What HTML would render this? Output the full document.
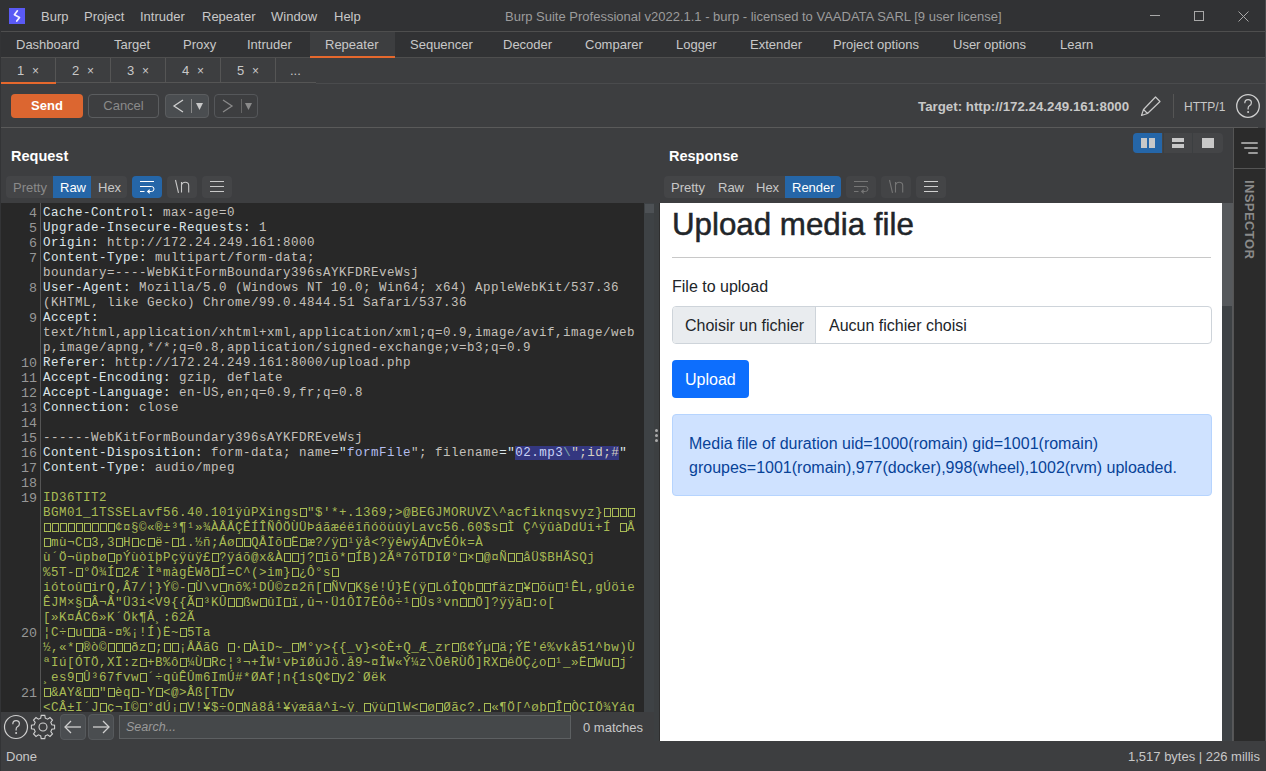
<!DOCTYPE html>
<html><head><meta charset="utf-8">
<style>
*{margin:0;padding:0;box-sizing:border-box}
html,body{width:1266px;height:771px;overflow:hidden;background:#3d3e40;font-family:"Liberation Sans",sans-serif;font-size:13px;color:#c8c8c8}
.a{position:absolute;white-space:pre}
#title{left:0;top:0;width:1266px;height:31px;background:#313234}
#tabs{left:0;top:32px;width:1266px;height:25px;background:#313234}
.hl{position:absolute;height:1px;background:#4e4e4e}
.ln{position:absolute;left:0;width:36px;text-align:right;font-family:"Liberation Mono",monospace;font-size:13.333px;line-height:15px;color:#979797}
.b{display:inline-block;width:8px;height:15px;vertical-align:top;position:relative}.b::after{content:"";box-sizing:border-box;position:absolute;left:1px;top:2px;width:7px;height:9px;border:1px solid currentColor}
.cr{position:absolute;left:42px;white-space:pre;font-family:"Liberation Mono",monospace;font-size:12.5px;letter-spacing:0.5px;line-height:15px}
</style></head><body>
<!-- title bar -->
<div class="a" id="title"></div>
<div class="a" style="left:9px;top:8px;width:16px;height:16px;background:#5a5af5"></div>
<div class="a" style="left:41px;top:9px">Burp</div>
<div class="a" style="left:84px;top:9px">Project</div>
<div class="a" style="left:140px;top:9px">Intruder</div>
<div class="a" style="left:202px;top:9px">Repeater</div>
<div class="a" style="left:271px;top:9px">Window</div>
<div class="a" style="left:334px;top:9px">Help</div>
<div class="a" style="left:505px;top:9px;color:#9c9c9c">Burp Suite Professional v2022.1.1 - burp - licensed to VAADATA SARL [9 user license]</div>
<div class="hl" style="left:0;top:31px;width:1266px"></div>
<!-- main tabs -->
<div class="a" id="tabs"></div>
<div class="a" style="left:310px;top:32px;width:85px;height:25px;background:#3d3e40"></div>
<div class="a" style="left:310px;top:56px;width:85px;height:2px;background:#e5682d;z-index:2"></div>
<div class="a" style="left:16px;top:37px">Dashboard</div>
<div class="a" style="left:114px;top:37px">Target</div>
<div class="a" style="left:183px;top:37px">Proxy</div>
<div class="a" style="left:247px;top:37px">Intruder</div>
<div class="a" style="left:325px;top:37px">Repeater</div>
<div class="a" style="left:410px;top:37px">Sequencer</div>
<div class="a" style="left:503px;top:37px">Decoder</div>
<div class="a" style="left:585px;top:37px">Comparer</div>
<div class="a" style="left:676px;top:37px">Logger</div>
<div class="a" style="left:750px;top:37px">Extender</div>
<div class="a" style="left:833px;top:37px">Project options</div>
<div class="a" style="left:953px;top:37px">User options</div>
<div class="a" style="left:1060px;top:37px">Learn</div>
<div class="hl" style="left:0;top:57px;width:1266px"></div>

<!-- subtabs -->
<div class="a" style="left:0;top:58px;width:316px;height:25px;background:#3d3e40"></div>
<div class="hl" style="left:316px;top:83px;width:950px;background:#4a4b4d"></div>
<div class="a" style="left:55px;top:58px;width:1px;height:24px;background:#555"></div>
<div class="a" style="left:110px;top:58px;width:1px;height:24px;background:#555"></div>
<div class="a" style="left:165px;top:58px;width:1px;height:24px;background:#555"></div>
<div class="a" style="left:220px;top:58px;width:1px;height:24px;background:#555"></div>
<div class="a" style="left:275px;top:58px;width:1px;height:24px;background:#555"></div>
<div class="hl" style="left:56px;top:82px;width:260px;background:#555"></div>
<div class="a" style="left:1px;top:82px;width:55px;height:2px;background:#e5682d"></div>
<div class="a" style="left:17px;top:63px">1</div><div class="a" style="left:32px;top:64px;font-size:12px">×</div>
<div class="a" style="left:72px;top:63px">2</div><div class="a" style="left:87px;top:64px;font-size:12px">×</div>
<div class="a" style="left:127px;top:63px">3</div><div class="a" style="left:142px;top:64px;font-size:12px">×</div>
<div class="a" style="left:182px;top:63px">4</div><div class="a" style="left:197px;top:64px;font-size:12px">×</div>
<div class="a" style="left:237px;top:63px">5</div><div class="a" style="left:252px;top:64px;font-size:12px">×</div>
<div class="a" style="left:290px;top:63px">...</div>
<!-- toolbar -->
<div class="a" style="left:11px;top:94px;width:72px;height:24px;background:#dc6630;border-radius:4px;color:#fff;font-weight:bold;text-align:center;line-height:24px">Send</div>
<div class="a" style="left:88px;top:94px;width:71px;height:24px;border:1px solid #5b5d5f;border-radius:4px;color:#8a8a8a;text-align:center;line-height:22px">Cancel</div>
<div class="a" style="left:165px;top:94px;width:44px;height:24px;border:1px solid #5b5d5f;border-radius:4px;background:#4a4d50"></div>
<div class="a" style="left:214px;top:94px;width:44px;height:24px;border:1px solid #55575a;border-radius:4px"></div>
<div class="hl" style="left:0;top:127px;width:1258px;background:#5a5a5a"></div>
<div class="a" style="left:918px;top:99px;font-weight:bold;font-size:13.3px;color:#c8c8c8">Target: http://172.24.249.161:8000</div>
<div class="a" style="left:1173px;top:94px;width:1px;height:24px;background:#555"></div>
<div class="a" style="left:1184px;top:100px;font-size:12px;color:#c8c8c8">HTTP/1</div>

<!-- nav buttons icons -->
<svg class="a" style="left:165px;top:94px" width="94" height="24" viewBox="0 0 94 24">
<polyline points="18,6 9,12 18,18" fill="none" stroke="#cfcfcf" stroke-width="1.3"/>
<line x1="26.5" y1="5" x2="26.5" y2="19" stroke="#8a8a8a" stroke-width="1"/>
<polygon points="31,9 38,9 34.5,16" fill="#c8c8c8"/>
<polyline points="58,6 67,12 58,18" fill="none" stroke="#8a8a8a" stroke-width="1.3"/>
<line x1="76.5" y1="5" x2="76.5" y2="19" stroke="#666" stroke-width="1"/>
<polygon points="80,9 87,9 83.5,16" fill="#8a8a8a"/>
</svg>
<!-- pencil -->
<svg class="a" style="left:1140px;top:95px" width="24" height="24" viewBox="0 0 24 24">
<path d="M1.5 20.5 L3.5 14.5 L15.5 2 L20 6.5 L7.5 18.5 Z M3.5 14.5 L7.5 18.5" fill="none" stroke="#c8c8c8" stroke-width="1.2" stroke-linejoin="round"/>
</svg>
<!-- help -->
<svg class="a" style="left:1236px;top:94px" width="25" height="25" viewBox="0 0 25 25">
<circle cx="12" cy="12" r="11.3" fill="none" stroke="#cfcfcf" stroke-width="1.3"/>
<path d="M8.8 9.2 Q8.8 5.6 12.1 5.6 Q15.4 5.6 15.4 8.7 Q15.4 10.6 13.4 11.8 Q12.1 12.6 12.1 14.4 V15.6" fill="none" stroke="#cfcfcf" stroke-width="1.2"/><circle cx="12.1" cy="18" r="1" fill="#cfcfcf"/>
</svg>
<!-- panel headers -->
<div class="a" style="left:11px;top:148px;font-weight:bold;font-size:14.5px;color:#fff">Request</div>
<div class="a" style="left:669px;top:148px;font-weight:bold;font-size:14.5px;color:#fff">Response</div>
<!-- request buttons -->
<div class="a" style="left:6px;top:176px;width:121px;height:22px;background:#444547;border-radius:4px"></div>
<div class="a" style="left:53px;top:176px;width:38px;height:22px;background:#2566a8"></div>
<div class="a" style="left:13px;top:180px;color:#8a8a8a">Pretty</div>
<div class="a" style="left:60px;top:180px;color:#fff">Raw</div>
<div class="a" style="left:98px;top:180px;color:#c8c8c8">Hex</div>
<div class="a" style="left:132px;top:176px;width:30px;height:22px;background:#2566a8;border-radius:4px"></div>
<div class="a" style="left:167px;top:176px;width:30px;height:22px;background:#444547;border-radius:4px"></div>
<div class="a" style="left:202px;top:176px;width:30px;height:22px;background:#444547;border-radius:4px"></div>
<svg class="a" style="left:132px;top:176px" width="100" height="22" viewBox="0 0 100 22">
<g fill="none" stroke-width="1">
<path d="M8 5.5 H22 M8 10.5 H19.5 A2.5 2.5 0 0 1 19.5 15.5 H16.5 M8 15.5 H12.5" stroke="#ffffff"/>
<polygon points="14.8,15.5 17.6,13 17.6,18" fill="#ffffff" stroke="none"/>
<path d="M43.5 4 L46.5 16.8 M49.5 16.5 V6 M49.5 8.8 Q50.5 6.3 53.2 6.3 Q56.7 6.3 56.7 9.5 V16.5" stroke="#c8c8c8" stroke-width="1.1"/>
<path d="M78 5.5 H92 M78 10.5 H92 M78 15.5 H92" stroke="#c8c8c8"/>
</g>
</svg>
<!-- response buttons -->
<div class="a" style="left:664px;top:176px;width:177px;height:22px;background:#444547;border-radius:4px"></div>
<div class="a" style="left:785px;top:176px;width:56px;height:22px;background:#2566a8;border-radius:0 4px 4px 0"></div>
<div class="a" style="left:671px;top:180px;color:#c8c8c8">Pretty</div>
<div class="a" style="left:718px;top:180px;color:#c8c8c8">Raw</div>
<div class="a" style="left:756px;top:180px;color:#c8c8c8">Hex</div>
<div class="a" style="left:792px;top:180px;color:#fff">Render</div>
<div class="a" style="left:846px;top:176px;width:30px;height:22px;background:#434446;border-radius:4px"></div>
<div class="a" style="left:881px;top:176px;width:30px;height:22px;background:#434446;border-radius:4px"></div>
<div class="a" style="left:916px;top:176px;width:30px;height:22px;background:#444547;border-radius:4px"></div>
<svg class="a" style="left:846px;top:176px" width="100" height="22" viewBox="0 0 100 22">
<g fill="none" stroke-width="1">
<path d="M8 5.5 H22 M8 10.5 H19.5 A2.5 2.5 0 0 1 19.5 15.5 H16.5 M8 15.5 H12.5" stroke="#767676"/>
<polygon points="14.8,15.5 17.6,13 17.6,18" fill="#767676" stroke="none"/>
<path d="M43.5 4 L46.5 16.8 M49.5 16.5 V6 M49.5 8.8 Q50.5 6.3 53.2 6.3 Q56.7 6.3 56.7 9.5 V16.5" stroke="#767676" stroke-width="1.1"/>
<path d="M78 5.5 H92 M78 10.5 H92 M78 15.5 H92" stroke="#d0d0d0"/>
</g>
</svg>
<!-- layout buttons -->
<div class="a" style="left:1133px;top:133px;width:90px;height:20px;background:#444547;border-radius:4px"></div>
<div class="a" style="left:1133px;top:133px;width:29px;height:20px;background:#2566a8;border-radius:4px 0 0 4px"></div>
<div class="a" style="left:1163px;top:133px;width:1px;height:20px;background:#3c3f41"></div>
<div class="a" style="left:1192px;top:133px;width:1px;height:20px;background:#3c3f41"></div>
<div class="a" style="left:1141px;top:138px;width:6px;height:10px;background:#c8c8c8"></div>
<div class="a" style="left:1149px;top:138px;width:6px;height:10px;background:#c8c8c8"></div>
<div class="a" style="left:1172px;top:138px;width:12px;height:4px;background:#c8c8c8"></div>
<div class="a" style="left:1172px;top:144px;width:12px;height:4px;background:#c8c8c8"></div>
<div class="a" style="left:1202px;top:138px;width:12px;height:10px;background:#c8c8c8"></div>
<!-- inspector -->
<div class="a" style="left:1233px;top:128px;width:1px;height:613px;background:#555"></div>
<div class="a" style="left:1234px;top:128px;width:32px;height:613px;background:#2b2b2b"></div>
<div class="a" style="left:1234px;top:168px;width:31px;height:1px;background:#555"></div>
<div class="a" style="left:1265px;top:128px;width:1px;height:613px;background:#4a4a4a"></div>
<div class="a" style="left:1241px;top:142px;width:17px;height:2px;background:#9a9a9a;border-radius:1px"></div>
<div class="a" style="left:1244px;top:147px;width:14px;height:2px;background:#9a9a9a;border-radius:1px"></div>
<div class="a" style="left:1248px;top:152px;width:10px;height:2px;background:#9a9a9a;border-radius:1px"></div>
<div class="a" style="left:1257px;top:180px;transform-origin:0 0;transform:rotate(90deg);font-weight:bold;font-size:13px;letter-spacing:0.4px;color:#8a8a8a">INSPECTOR</div>
<div class="a" style="left:1265px;top:266px;width:1px;height:20px;background:#3b6a9e"></div>

<!-- divider -->
<div class="a" style="left:654px;top:203px;width:5px;height:538px;background:#3c3f41"></div>
<div class="a" style="left:655px;top:429px;width:3px;height:3px;border-radius:50%;background:#aaa"></div>
<div class="a" style="left:655px;top:434px;width:3px;height:3px;border-radius:50%;background:#aaa"></div>
<div class="a" style="left:655px;top:439px;width:3px;height:3px;border-radius:50%;background:#aaa"></div>
<div class="a" style="left:659px;top:203px;width:1px;height:538px;background:#2e2e2e"></div>
<!-- render area -->
<div class="a" style="left:660px;top:203px;width:562px;height:538px;background:#fff;overflow:hidden">
  <div class="a" style="left:12px;top:4px;font-size:31.3px;color:#212529;-webkit-text-stroke:0.5px #212529">Upload media file</div>
  <div class="a" style="left:12px;top:54px;width:539px;height:1px;background:#c8c8c8"></div>
  <div class="a" style="left:12px;top:75px;font-size:16px;color:#212529">File to upload</div>
  <div class="a" style="left:12px;top:103px;width:540px;height:38px;border:1px solid #ced4da;border-radius:4px;overflow:hidden;background:#fff">
    <div class="a" style="left:0;top:0;width:143px;height:36px;background:#e9ecef;border-right:1px solid #ced4da"></div>
    <div class="a" style="left:12px;top:10px;font-size:16px;color:#212529">Choisir un fichier</div>
    <div class="a" style="left:156px;top:10px;font-size:16px;color:#212529">Aucun fichier choisi</div>
  </div>
  <div class="a" style="left:12px;top:157px;width:77px;height:38px;background:#0d6efd;border-radius:4px"></div>
  <div class="a" style="left:25px;top:168px;font-size:16px;color:#fff">Upload</div>
  <div class="a" style="left:12px;top:211px;width:540px;height:82px;background:#cfe2ff;border:1px solid #b6d4fe;border-radius:4px"></div>
  <div class="a" style="left:29px;top:229px;font-size:16px;line-height:24px;color:#084298">Media file of duration uid=1000(romain) gid=1001(romain)
groupes=1001(romain),977(docker),998(wheel),1002(rvm) uploaded.</div>
</div>
<div class="a" style="left:1222px;top:203px;width:11px;height:538px;background:#3e4245"></div>
<div class="a" style="left:1222px;top:203px;width:10px;height:103px;background:#56595c"></div>
<div class="a" style="left:1232px;top:203px;width:1px;height:538px;background:#58595b"></div>
<!-- search bar -->
<svg class="a" style="left:3px;top:714px" width="54" height="26" viewBox="0 0 54 26">
<circle cx="13" cy="13" r="11.5" fill="none" stroke="#cfcfcf" stroke-width="1.2"/>
<path d="M9.8 10.2 Q9.8 6.6 13.1 6.6 Q16.4 6.6 16.4 9.7 Q16.4 11.6 14.4 12.8 Q13.1 13.6 13.1 15.4 V16.6" fill="none" stroke="#cfcfcf" stroke-width="1.2"/><circle cx="13.1" cy="19" r="1" fill="#cfcfcf"/>
<g transform="translate(40,13)" fill="none" stroke="#cfcfcf" stroke-width="1.1">
<path d="M-1.8,-11 L1.8,-11 L2.3,-8.2 L4.6,-7.2 L7,-8.9 L9.5,-6.4 L7.8,-4 L8.8,-1.7 L11.6,-1.2 L11.6,2.4 L8.8,2.9 L7.8,5.2 L9.5,7.6 L7,10.1 L4.6,8.4 L2.3,9.4 L1.8,12.2 L-1.8,12.2 L-2.3,9.4 L-4.6,8.4 L-7,10.1 L-9.5,7.6 L-7.8,5.2 L-8.8,2.9 L-11.6,2.4 L-11.6,-1.2 L-8.8,-1.7 L-7.8,-4 L-9.5,-6.4 L-7,-8.9 L-4.6,-7.2 L-2.3,-8.2 Z" transform="translate(0,-0.6)"/>
<circle cx="0" cy="0" r="4"/>
</g>
</svg>
<div class="a" style="left:60px;top:714px;width:26px;height:26px;background:#4a4d50;border:1px solid #56595c;border-radius:4px"></div>
<div class="a" style="left:88px;top:714px;width:26px;height:26px;background:#4a4d50;border:1px solid #56595c;border-radius:4px"></div>
<svg class="a" style="left:60px;top:714px" width="54" height="26" viewBox="0 0 54 26">
<g fill="none" stroke="#cfcfcf" stroke-width="1.3">
<line x1="5" y1="13" x2="21" y2="13"/><polyline points="11,7 5,13 11,19"/>
<line x1="33" y1="13" x2="49" y2="13"/><polyline points="43,7 49,13 43,19"/>
</g>
</svg>
<div class="a" style="left:119px;top:715px;width:452px;height:24px;background:#45484a;border:1px solid #5d6062"></div>
<div class="a" style="left:126px;top:720px;font-style:italic;font-size:12.5px;color:#9a9a9a">Search...</div>
<div class="a" style="left:583px;top:720px;color:#c8c8c8">0 matches</div>
<!-- status bar -->
<div class="a" style="left:6px;top:749px;color:#c8c8c8">Done</div>
<div class="a" style="left:1260px;top:749px;transform:translateX(-100%);color:#c8c8c8">1,517 bytes | 226 millis</div>
<!-- logo bolt -->
<svg class="a" style="left:9px;top:8px" width="16" height="16" viewBox="0 0 16 16">
<path d="M8.4 2.8 L5.4 6.7 L10.5 9.4 L7.8 13" fill="none" stroke="#f4f0ff" stroke-width="1.7" stroke-linecap="round" stroke-linejoin="round"/>
</svg>

<!-- window controls -->
<svg class="a" style="left:1140px;top:0" width="126" height="31" viewBox="0 0 126 31">
<g stroke="#a8a8a8" stroke-width="1" fill="none">
<line x1="10" y1="15.5" x2="20" y2="15.5"/>
<rect x="54.5" y="11.5" width="9" height="9"/>
<line x1="98.5" y1="11.5" x2="108.5" y2="21.5"/><line x1="108.5" y1="11.5" x2="98.5" y2="21.5"/>
</g></svg>
<div class="a" style="left:1265px;top:0;width:1px;height:741px;background:#4a4b4d"></div>
<div class="a" style="left:0;top:31px;width:1px;height:740px;background:#333436"></div>
<!--EDITOR-->
<div class="a" style="left:1px;top:203px;width:643px;height:509px;background:#282828;overflow:hidden">
<div class="a" style="left:39px;top:0;width:1px;height:509px;background:#555"></div>
<div class="ln" style="top:3px">4</div>
<div class="cr" style="top:3px"><span style="color:#dce6ea">Cache-Control:</span><span style="color:#c4c0bb"> max-age=0</span></div>
<div class="ln" style="top:18px">5</div>
<div class="cr" style="top:18px"><span style="color:#dce6ea">Upgrade-Insecure-Requests:</span><span style="color:#c4c0bb"> 1</span></div>
<div class="ln" style="top:33px">6</div>
<div class="cr" style="top:33px"><span style="color:#dce6ea">Origin:</span><span style="color:#c4c0bb"> http://172.24.249.161:8000</span></div>
<div class="ln" style="top:48px">7</div>
<div class="cr" style="top:48px"><span style="color:#dce6ea">Content-Type:</span><span style="color:#c4c0bb"> multipart/form-data;</span></div>
<div class="cr" style="top:63px"><span style="color:#c4c0bb">boundary=----WebKitFormBoundary396sAYKFDREveWsj</span></div>
<div class="ln" style="top:78px">8</div>
<div class="cr" style="top:78px"><span style="color:#dce6ea">User-Agent:</span><span style="color:#c4c0bb"> Mozilla/5.0 (Windows NT 10.0; Win64; x64) AppleWebKit/537.36</span></div>
<div class="cr" style="top:93px"><span style="color:#c4c0bb">(KHTML, like Gecko) Chrome/99.0.4844.51 Safari/537.36</span></div>
<div class="ln" style="top:108px">9</div>
<div class="cr" style="top:108px"><span style="color:#dce6ea">Accept:</span><span style="color:#c4c0bb"></span></div>
<div class="cr" style="top:123px"><span style="color:#c4c0bb">text/html,application/xhtml+xml,application/xml;q=0.9,image/avif,image/web</span></div>
<div class="cr" style="top:138px"><span style="color:#c4c0bb">p,image/apng,*/*;q=0.8,application/signed-exchange;v=b3;q=0.9</span></div>
<div class="ln" style="top:153px">10</div>
<div class="cr" style="top:153px"><span style="color:#dce6ea">Referer:</span><span style="color:#c4c0bb"> http://172.24.249.161:8000/upload.php</span></div>
<div class="ln" style="top:168px">11</div>
<div class="cr" style="top:168px"><span style="color:#dce6ea">Accept-Encoding:</span><span style="color:#c4c0bb"> gzip, deflate</span></div>
<div class="ln" style="top:183px">12</div>
<div class="cr" style="top:183px"><span style="color:#dce6ea">Accept-Language:</span><span style="color:#c4c0bb"> en-US,en;q=0.9,fr;q=0.8</span></div>
<div class="ln" style="top:198px">13</div>
<div class="cr" style="top:198px"><span style="color:#dce6ea">Connection:</span><span style="color:#c4c0bb"> close</span></div>
<div class="ln" style="top:213px">14</div>
<div class="cr" style="top:213px"></div>
<div class="ln" style="top:228px">15</div>
<div class="cr" style="top:228px"><span style="color:#c4c0bb">------WebKitFormBoundary396sAYKFDREveWsj</span></div>
<div class="ln" style="top:243px">16</div>
<div class="cr" style="top:243px"><span style="color:#dce6ea">Content-Disposition:</span><span style="color:#c4c0bb"> form-data; name</span><span style="color:#dce6ea">=&quot;</span><span style="color:#b3bdee">formFile</span><span style="color:#c4c0bb">&quot;; </span><span style="color:#c4c0bb">filename</span><span style="color:#dce6ea">=&quot;</span><span style="background:#343780"><span style="color:#c9d1f6">02.mp3</span><span style="color:#7fa8a8">\</span><span style="color:#d6d0c0">";id;#</span></span><span style="color:#dce6ea">&quot;</span></div>
<div class="ln" style="top:258px">17</div>
<div class="cr" style="top:258px"><span style="color:#dce6ea">Content-Type:</span><span style="color:#c4c0bb"> audio/mpeg</span></div>
<div class="ln" style="top:273px">18</div>
<div class="cr" style="top:273px"></div>
<div class="ln" style="top:288px">19</div>
<div class="cr" style="top:288px"><span style="color:#a9bb55">ID36TIT2</span></div>
<div class="cr" style="top:303px"><span style="color:#a9bb55">BGM01_1TSSELavf56.40.101ÿûPXings<i class="b"></i>&quot;$&#x27;*+.1369;&gt;@BEGJMORUVZ\^acfiknqsvyz}<i class="b"></i><i class="b"></i><i class="b"></i><i class="b"></i></span></div>
<div class="cr" style="top:318px"><span style="color:#a9bb55"><i class="b"></i><i class="b"></i><i class="b"></i><i class="b"></i><i class="b"></i><i class="b"></i><i class="b"></i><i class="b"></i><i class="b"></i>¢¤§©«®±³¶¹»¾ÀÂÅÇÊÍÎÑÔÖÙÜÞáãæéëîñóöùûýLavc56.60$s<i class="b"></i>Ì Ç^ÿûàDdUi+Í <i class="b"></i>Å</span></div>
<div class="cr" style="top:333px"><span style="color:#a9bb55"><i class="b"></i>mù¬C<i class="b"></i>3,3<i class="b"></i>H<i class="b"></i>c<i class="b"></i>ë-<i class="b"></i>1.½ñ;Áø<i class="b"></i><i class="b"></i>QÅÏõ<i class="b"></i>Ë<i class="b"></i>æ?/ÿ<i class="b"></i>¹ÿå&lt;?ÿêwÿÁ<i class="b"></i>vÉÓk=À</span></div>
<div class="cr" style="top:348px"><span style="color:#a9bb55">ù´Ö¬üpbø<i class="b"></i>pÝùòïþPçÿùÿ£<i class="b"></i>?ÿáõ@x&amp;À<i class="b"></i><i class="b"></i>j?<i class="b"></i>îõ*<i class="b"></i>ÍB)2Ãª7óTDIØ°<i class="b"></i>×<i class="b"></i>@¤Ñ<i class="b"></i><i class="b"></i>åÜ$BHÃSQj</span></div>
<div class="cr" style="top:363px"><span style="color:#a9bb55">%5T-<i class="b"></i>°Ö¾Í<i class="b"></i>2Æ`ÌªmàgÈWð<i class="b"></i>Í=C^(&gt;im}<i class="b"></i>¿Ô°s<i class="b"></i></span></div>
<div class="cr" style="top:378px"><span style="color:#a9bb55">iótoû<i class="b"></i>irQ,Â7/¦}Ý©-<i class="b"></i>Ù\v<i class="b"></i>nõ%¹DÛ©z¤2ñ[<i class="b"></i>ÑV<i class="b"></i>K§é!Ú}Ë(ÿ<i class="b"></i>LóÎQb<i class="b"></i><i class="b"></i>fäz<i class="b"></i>¥<i class="b"></i>õù<i class="b"></i>¹ÊL,gÚöìe</span></div>
<div class="cr" style="top:393px"><span style="color:#a9bb55">ÊJM×§<i class="b"></i>Â¬Å&quot;Ü3í&lt;V9{{Ã<i class="b"></i>³KÛ<i class="b"></i><i class="b"></i>ßw<i class="b"></i>ûI<i class="b"></i>ï,û¬·Ü1ÔÏ7ËÔô÷¹<i class="b"></i>Üs³vn<i class="b"></i><i class="b"></i>Ö]?ÿÿã<i class="b"></i>:o[</span></div>
<div class="cr" style="top:408px"><span style="color:#a9bb55">[»K¤ÁC6»K´Ök¶Â¸:62Ã</span></div>
<div class="ln" style="top:423px">20</div>
<div class="cr" style="top:423px"><span style="color:#a9bb55">¦C÷<i class="b"></i>u<i class="b"></i><i class="b"></i>ã-¤%¡!Í)Ë~<i class="b"></i>5Ta</span></div>
<div class="cr" style="top:438px"><span style="color:#a9bb55">½,«*<i class="b"></i>®ò©<i class="b"></i><i class="b"></i><i class="b"></i>ðz<i class="b"></i>;<i class="b"></i><i class="b"></i>¡ÅÄãG <i class="b"></i>·<i class="b"></i>ÀîD~_<i class="b"></i>M°y&gt;{{_v}&lt;òÈ+Q_Æ_zr<i class="b"></i>ß¢Ýµ<i class="b"></i>ä;ÝË&#x27;é%vkå51^bw)Ù</span></div>
<div class="cr" style="top:453px"><span style="color:#a9bb55">ªIú[ÓTÖ,XÏ:z<i class="b"></i>+B%ô<i class="b"></i>¼Ù<i class="b"></i>Rc¦³¬+ÎW¹vÞïØúJö.å9~¤ÎW«Ý¼z\ÖêRÙÕ]RX<i class="b"></i>êÖÇ¿o<i class="b"></i>¹_»Ë<i class="b"></i>Wu<i class="b"></i>j´</span></div>
<div class="cr" style="top:468px"><span style="color:#a9bb55">¸es9<i class="b"></i>Û³67fvw<i class="b"></i>´÷qûÊÛm6ImÚ#*ØAf¦n{1sQ¢<i class="b"></i>y2`Øëk</span></div>
<div class="ln" style="top:483px">21</div>
<div class="cr" style="top:483px"><span style="color:#a9bb55"><i class="b"></i>&amp;AY&amp;<i class="b"></i><i class="b"></i>&quot;<i class="b"></i>èq<i class="b"></i>-Y<i class="b"></i>&lt;@&gt;Âß[T<i class="b"></i>v</span></div>
<div class="cr" style="top:498px"><span style="color:#a9bb55">&lt;CÂ±I´J<i class="b"></i>ç¬I©<i class="b"></i>°dÚ¡<i class="b"></i>V!¥$÷O<i class="b"></i>Nâ8å¹¥ýæãâ^î~ÿ¸<i class="b"></i>ÿù<i class="b"></i>lW&lt;<i class="b"></i>ø<i class="b"></i>Øãç?.<i class="b"></i>«¶Ö[^øþ<i class="b"></i>Î<i class="b"></i>ÒÇIÖ¾Yáq</span></div>
</div>
<div class="a" style="left:644px;top:203px;width:10px;height:509px;background:#3e4245"></div>
<div class="a" style="left:645px;top:204px;width:9px;height:9px;background:#4d5155"></div>
<!--/EDITOR-->
</body></html>
